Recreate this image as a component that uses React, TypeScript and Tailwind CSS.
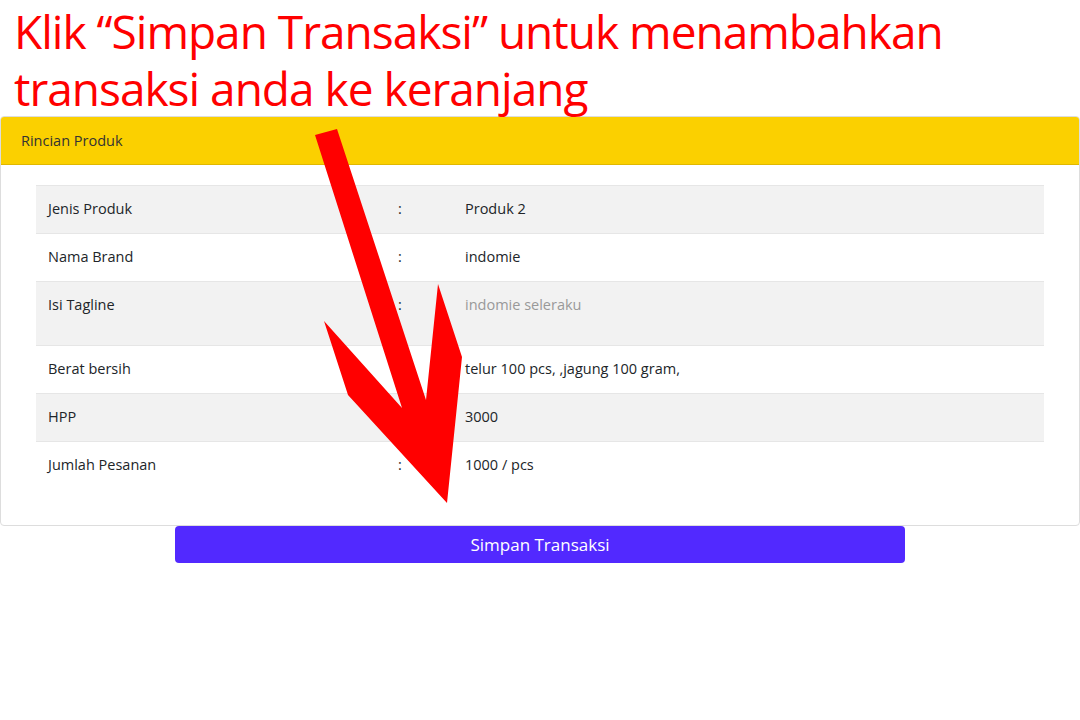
const ROWS = [
  { label: 'Jenis Produk', value: 'Produk 2', gray: true },
  { label: 'Nama Brand', value: 'indomie' },
  { label: 'Isi Tagline', value: 'indomie seleraku', gray: true, tall: true, muted: true },
  { label: 'Berat bersih', value: 'telur 100 pcs, ,jagung 100 gram,' },
  { label: 'HPP', value: '3000', gray: true },
  { label: 'Jumlah Pesanan', value: '1000 / pcs' },
]

function Arrow() {
  return (
    <svg className="absolute left-0 top-0 pointer-events-none" width="1080" height="720" viewBox="0 0 1080 720">
      <polygon
        fill="#ff0000"
        points="315,135 337,129 426,400 438,284 462,357 447,503 348,395 324,321 402,408"
      />
    </svg>
  )
}

export default function App() {
  return (
    <div className="relative w-[1080px] h-[720px] bg-white overflow-hidden font-['Open_Sans',sans-serif]">
      <div className="h-[116px] pl-[14px] pt-[3px] text-[#ff0000] text-[46px] leading-[57px] tracking-[-1px]">
        <div>Klik “Simpan Transaksi” untuk menambahkan</div>
        <div>transaksi anda ke keranjang</div>
      </div>

      <div className="border border-[#dddddd] rounded-[4px] overflow-hidden">
        <div className="h-[48px] bg-[#fbd000] border-b border-[#e0b800] flex items-center pl-[20px] text-[14.5px] text-[#333333]">
          Rincian Produk
        </div>
        <div className="px-[35px] pt-[20px] pb-[36px]">
          {ROWS.map(r => (
            <div
              key={r.label}
              className={`flex border-t border-[#e6e6e6] text-[14.5px] text-[#212529] ${r.gray ? 'bg-[#f2f2f2]' : 'bg-white'} ${r.tall ? 'h-[64px]' : 'h-[48px]'}`}
            >
              <div className="w-[362px] pl-[12px] pt-[12px]">{r.label}</div>
              <div className="w-[67px] pt-[12px]">:</div>
              <div className={`pt-[12px] ${r.muted ? 'text-[#999999]' : ''}`}>{r.value}</div>
            </div>
          ))}
        </div>
      </div>

      <div className="flex justify-center">
        <button className="w-[730px] h-[37px] bg-[#5229ff] text-white text-[17px] rounded-[4px]">
          Simpan Transaksi
        </button>
      </div>

      <Arrow />
    </div>
  )
}
